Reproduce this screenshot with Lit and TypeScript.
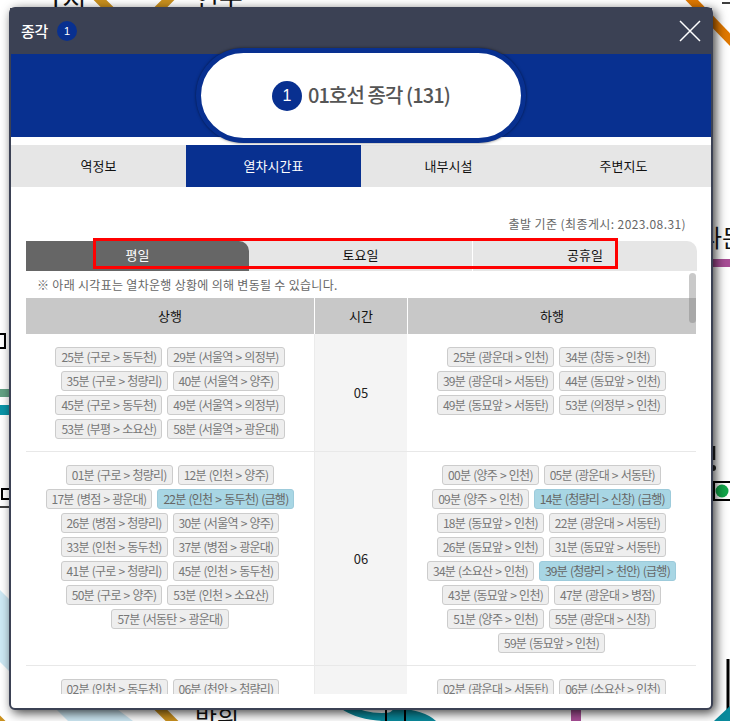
import { LitElement, html, css, svg } from "lit";
import { customElement } from "lit/decorators.js";

type Row = string[];
interface Hour { h: string; up: Row[]; down: Row[]; }
const X = "*";
const HOURS: Hour[] = [
  {
    h: "05",
    up: [
      ["25분 (구로 > 동두천)", "29분 (서울역 > 의정부)"],
      ["35분 (구로 > 청량리)", "40분 (서울역 > 양주)"],
      ["45분 (구로 > 동두천)", "49분 (서울역 > 의정부)"],
      ["53분 (부평 > 소요산)", "58분 (서울역 > 광운대)"],
    ],
    down: [
      ["25분 (광운대 > 인천)", "34분 (창동 > 인천)"],
      ["39분 (광운대 > 서동탄)", "44분 (동묘앞 > 인천)"],
      ["49분 (동묘앞 > 서동탄)", "53분 (의정부 > 인천)"],
    ],
  },
  {
    h: "06",
    up: [
      ["01분 (구로 > 청량리)", "12분 (인천 > 양주)"],
      ["17분 (병점 > 광운대)", X + "22분 (인천 > 동두천) (급행)"],
      ["26분 (병점 > 청량리)", "30분 (서울역 > 양주)"],
      ["33분 (인천 > 동두천)", "37분 (병점 > 광운대)"],
      ["41분 (구로 > 청량리)", "45분 (인천 > 동두천)"],
      ["50분 (구로 > 양주)", "53분 (인천 > 소요산)"],
      ["57분 (서동탄 > 광운대)"],
    ],
    down: [
      ["00분 (양주 > 인천)", "05분 (광운대 > 서동탄)"],
      ["09분 (양주 > 인천)", X + "14분 (청량리 > 신창) (급행)"],
      ["18분 (동묘앞 > 인천)", "22분 (광운대 > 서동탄)"],
      ["26분 (동묘앞 > 인천)", "31분 (동묘앞 > 서동탄)"],
      ["34분 (소요산 > 인천)", X + "39분 (청량리 > 천안) (급행)"],
      ["43분 (동묘앞 > 인천)", "47분 (광운대 > 병점)"],
      ["51분 (양주 > 인천)", "55분 (광운대 > 신창)"],
      ["59분 (동묘앞 > 인천)"],
    ],
  },
  {
    h: "07",
    up: [["02분 (인천 > 동두천)", "06분 (천안 > 청량리)"]],
    down: [["02분 (광운대 > 서동탄)", "06분 (소요산 > 인천)"]],
  },
];

const mapShapes = svg`
  <g fill="none" stroke-linecap="butt">
    <path d="M92 -8 L118 18 M176 -8 L150 18" stroke="#c9901e" stroke-width="9"/>
    <path d="M684 -8 L740 50" stroke="#e07800" stroke-width="9"/>
    <path d="M155 704 L178 727" stroke="#c9901e" stroke-width="9"/>
    <path d="M-3 716 L6 725" stroke="#c9901e" stroke-width="5"/>
    <path d="M576 700 V725" stroke="#a84e96" stroke-width="10"/>
    <path d="M712 263 H730" stroke="#a84e96" stroke-width="8"/>
    <path d="M0 393 H12" stroke="#62a184" stroke-width="8"/>
    <path d="M0 410 H12" stroke="#0a95a8" stroke-width="10"/>
    <path d="M0 507 H12" stroke="#000" stroke-width="1.5"/>
    <path d="M68 720.5 H90 M97 720.5 H117" stroke="#111" stroke-width="1.5"/>
    <rect x="-6" y="334" width="11" height="14" stroke="#000" stroke-width="2"/>
    <rect x="2" y="489" width="9" height="10" stroke="#000" stroke-width="2"/>
    <rect x="714" y="482" width="20" height="18" stroke="#000" stroke-width="2"/>
    <path d="M714 446 V460" stroke="#222" stroke-width="2.5"/>
    <path d="M728 659 V721" stroke="#000" stroke-width="3"/>
    <path d="M722 3 H732" stroke="#000" stroke-width="1.5"/>
  </g>
  <circle cx="722" cy="491" r="6.5" fill="#12a64a"/>
  <circle cx="713" cy="468" r="3" fill="#222"/>
  <polygon points="0,590 12,602 12,674 0,662" fill="#cde8f4"/>
  <polygon points="53,706 113,706 133,721 68,721" fill="#cde8f4"/>
  <path d="M345 704 Q372 716 392 712 L392 721 Q360 722 340 708 Z" fill="#0a8a9c"/>
  <path d="M395 708 Q425 710 436 721 L380 721 Z" fill="#0a8a9c"/>
  <circle cx="396" cy="722" r="6" fill="#0a8a9c"/>
  <path d="M386 704 V721 M405 704 V721" stroke="#000" stroke-width="2" fill="none"/>
  <polygon points="730,706 730,721 714,721" fill="#0a8a9c"/>
  <g font-family="'Noto Sans CJK KR',sans-serif" fill="#111">
    <text x="48" y="9" font-size="26">1시</text>
    <text x="195" y="9" font-size="26">연구</text>
    <text x="195" y="728" font-size="24">방위</text>
    <text x="700" y="247" font-size="24">나든</text>
  </g>
`;

@customElement("app-root")
export class AppRoot extends LitElement {
  static styles = css`
    :host {
      display: block;
      position: relative;
      width: 730px;
      height: 721px;
      overflow: hidden;
      background: #fff;
      font-family: "Noto Sans CJK KR", "Noto Sans", sans-serif;
      box-sizing: border-box;
      padding: 7px 0 0 9px;
    }
    .map { position: absolute; left: 0; top: 0; width: 730px; height: 721px; }
    .modal {
      position: relative;
      box-sizing: border-box;
      width: 704px;
      height: 703px;
      border: 2px solid #3b4154;
      border-radius: 6px;
      background: #fff;
      box-shadow: 3px 3px 11px rgba(0, 0, 0, 0.75);
      display: flex;
      flex-direction: column;
    }
    .head {
      flex: none;
      box-sizing: border-box;
      height: 46px;
      margin: -1px -1px 0;
      padding: 0 10px 1px 11px;
      background: #3b4154;
      display: flex;
      align-items: center;
      gap: 9px;
      color: #fff;
    }
    .head .t { font-size: 15px; font-weight: 500; line-height: 20px; letter-spacing: -0.3px; }
    .badge {
      width: 20px; height: 20px; border-radius: 50%;
      background: #083090; color: #fff; font-family: "Liberation Sans", sans-serif;
      font-size: 11px; display: flex; align-items: center; justify-content: center;
    }
    .close { margin-left: auto; margin-right: 1px; width: 22px; height: 22px; display: block; }
    .band {
      position: relative;
      flex: none;
      height: 83px;
      background: #083090;
      display: flex;
      justify-content: center;
      align-items: center;
      margin-bottom: 8px;
    }
    .pill {
      box-sizing: border-box;
      width: 330px;
      height: 95px;
      border: 5px solid #083090;
      border-radius: 48px;
      background: #fff;
      box-shadow: 0 0 3px rgba(0, 0, 0, 0.55);
      display: flex;
      align-items: center;
      justify-content: center;
      gap: 6px;
      color: #555;
      font-size: 20px;
      font-weight: 500;
      letter-spacing: -0.9px;
      line-height: 30px;
      position: relative;
      z-index: 1;
    }
    .pill .title { margin-top: -2px; }
    .pill .num {
      width: 30px; height: 30px; border-radius: 50%;
      background: #083090; color: #fff; letter-spacing: 0;
      font-family: "Liberation Sans", sans-serif; font-size: 16px; font-weight: 400;
      display: flex; align-items: center; justify-content: center;
    }
    .tabs { flex: none; display: grid; grid-template-columns: repeat(4, 175px); height: 42px; background: #e6e6e6; }
    .tabs div { display: flex; align-items: center; justify-content: center; font-size: 13px; color: #111; line-height: 20px; }
    .tabs .on { background: #083090; color: #fff; }
    .body { position: relative; flex: 1; min-height: 0; padding: 0 15px; display: flex; flex-direction: column; }
    .basis {
      flex: none; height: 54px; box-sizing: border-box; padding: 28px 10px 0 0; text-align: right;
      font-size: 12px; line-height: 18px; color: #666; letter-spacing: 0.4px;
    }
    .days {
      flex: none; display: grid; grid-template-columns: 223px 224px 224px; height: 30px;
      background: #e6e6e6; border-top-right-radius: 10px; width: 671px; overflow: hidden;
    }
    .days div { display: flex; align-items: center; justify-content: center; padding-bottom: 2px; box-sizing: border-box; font-size: 13px; line-height: 20px; color: #111; }
    .days .on { background: #666; color: #fff; border-top-right-radius: 10px; }
    .days .sat { border-right: 1px solid #fff; }
    .red {
      position: absolute; box-sizing: border-box; left: 82px; top: 51px; width: 525px; height: 31px;
      border: 3px solid #f00; pointer-events: none;
    }
    .scroll { position: relative; flex: none; width: 671px; height: 421px; margin-top: 2px; overflow: hidden; }
    .thumb { position: absolute; left: 663px; top: 0; width: 7px; height: 50px; border-radius: 4px; background: rgba(120, 120, 120, 0.4); z-index: 2; }
    .note { height: 25px; box-sizing: border-box; padding: 3px 0 0 11px; font-size: 12px; line-height: 18px; color: #666; letter-spacing: 0.3px; }
    .grid { display: grid; grid-template-columns: 288px 93px 289px; width: 670px; }
    .th {
      height: 36px; background: #c8c8c8; display: flex; align-items: center; justify-content: center;
      font-size: 13px; color: #111; line-height: 20px;
    }
    .th.l { border-left: 1px solid #fff; }
    .cell {
      box-sizing: border-box; padding: 13px 0 12px; border-bottom: 1px solid #e8e8e8;
      display: flex; flex-direction: column; gap: 4px;
    }
    .time {
      box-sizing: border-box; border-bottom: 1px solid #e8e8e8; background: #f4f4f4;
      border-left: 1px solid #ebebeb;
      display: flex; align-items: center; justify-content: center; font-size: 13px; color: #222; line-height: 20px;
    }
    .time.tall { height: 160px; }
    .row { display: flex; justify-content: center; gap: 5px; }
    .chip {
      box-sizing: border-box; height: 20px; padding: 0 5px; border: 1px solid #ccc; border-radius: 3px;
      background: #eee; color: #777; font-size: 12px; line-height: 17px; letter-spacing: -0.75px;
      word-spacing: 1px; white-space: nowrap;
    }
    .chip.x { background: #a8d6e4; color: #666; border-color: #9dcbdb; }
  `;

  private chips(rows: Row[]) {
    return html`<div class="cell">
      ${rows.map(
        (r) => html`<div class="row">
          ${r.map((c) =>
            c.startsWith(X)
              ? html`<span class="chip x">${c.slice(1)}</span>`
              : html`<span class="chip">${c}</span>`
          )}
        </div>`
      )}
    </div>`;
  }

  render() {
    return html`
      <svg class="map" viewBox="0 0 730 721">${mapShapes}</svg>
      <div class="modal">
        <div class="head">
          <span class="t">종각</span>
          <span class="badge">1</span>
          <svg class="close" viewBox="0 0 22 22"><path d="M1 1 L21 21 M21 1 L1 21" stroke="#fff" stroke-width="1.5" fill="none"/></svg>
        </div>
        <div class="band">
          <div class="pill"><span class="num">1</span><span class="title">01호선 종각 (131)</span></div>
        </div>
        <div class="tabs">
          <div>역정보</div><div class="on">열차시간표</div><div>내부시설</div><div>주변지도</div>
        </div>
        <div class="body">
          <div class="basis">출발 기준 (최종게시: 2023.08.31)</div>
          <div class="days">
            <div class="on">평일</div><div class="sat">토요일</div><div>공휴일</div>
          </div>
          <div class="red"></div>
          <div class="scroll">
            <div class="thumb"></div>
            <div class="note">※ 아래 시각표는 열차운행 상황에 의해 변동될 수 있습니다.</div>
            <div class="grid">
              <div class="th">상행</div><div class="th l">시간</div><div class="th l">하행</div>
              ${HOURS.map(
                (h) => html`${this.chips(h.up)}<div class="time ${h.h === "07" ? "tall" : ""}">${h.h}</div>${this.chips(h.down)}`
              )}
            </div>
          </div>
        </div>
      </div>
    `;
  }
}
